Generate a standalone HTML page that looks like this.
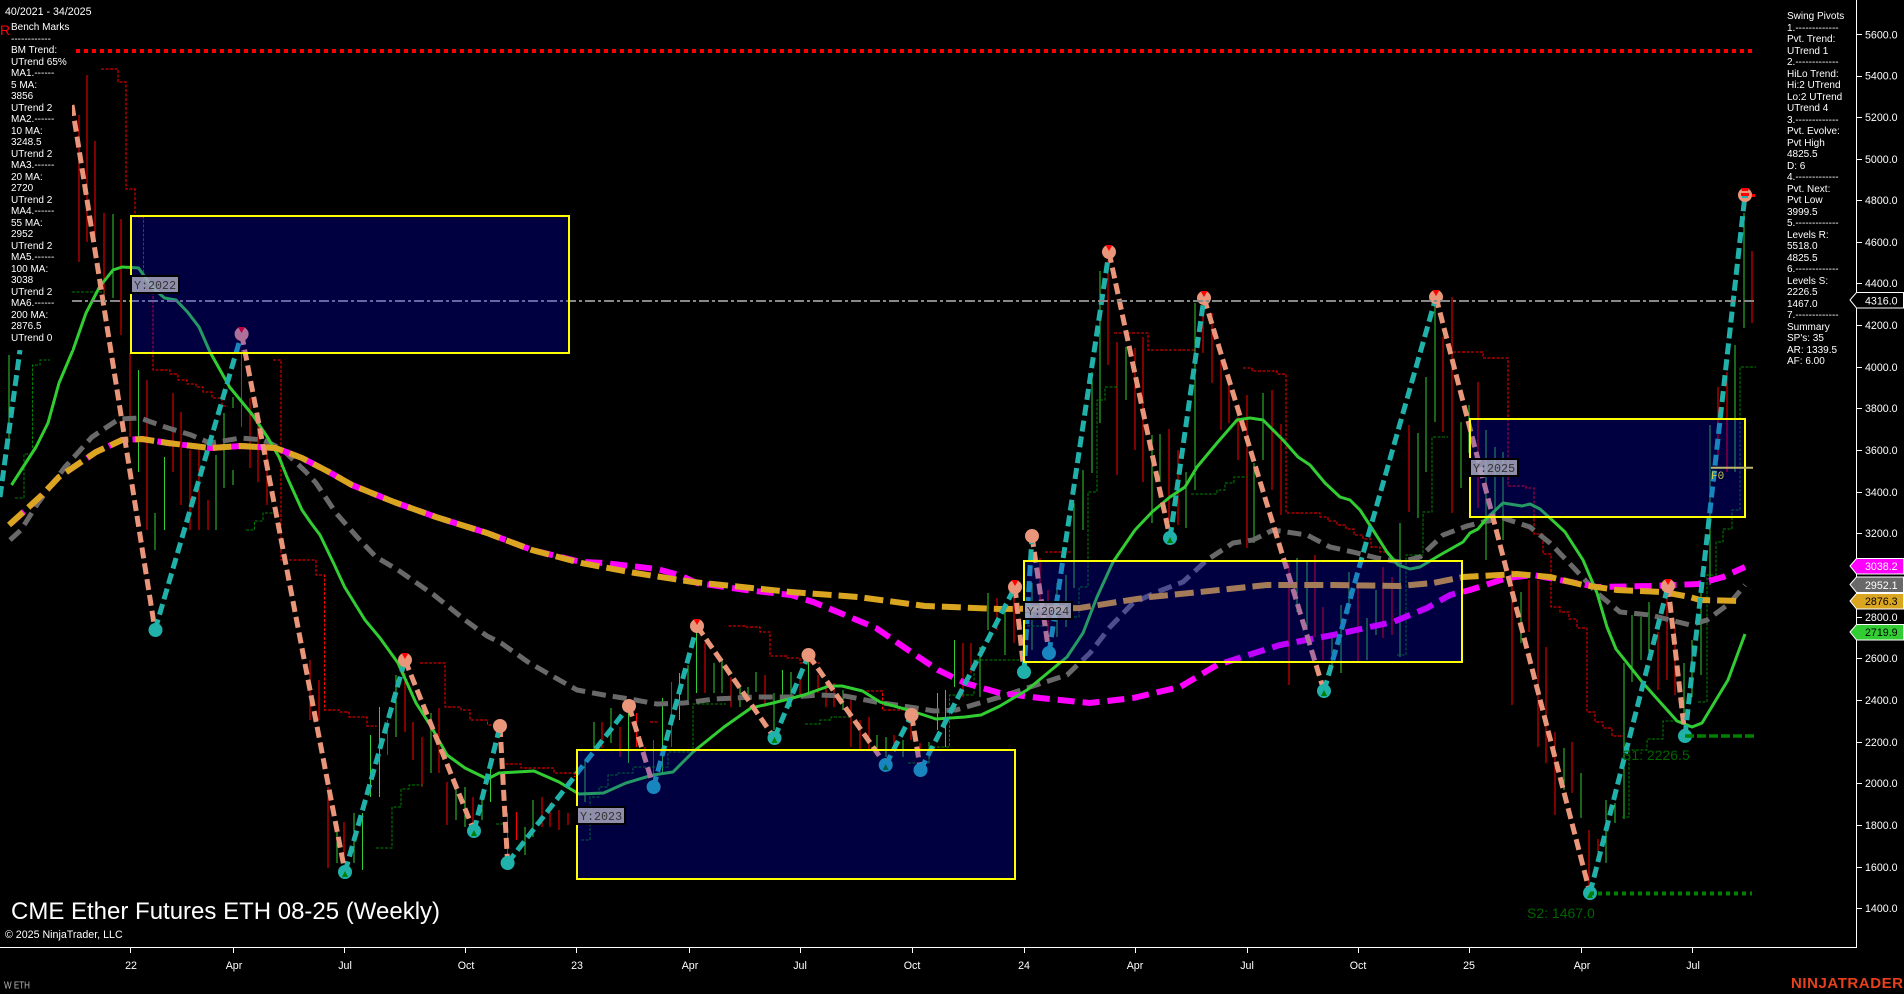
<!DOCTYPE html>
<html><head><meta charset="utf-8"><title>CME Ether Futures ETH 08-25 (Weekly)</title>
<style>
html,body{margin:0;padding:0;background:#000;width:1904px;height:994px;overflow:hidden}
body{position:relative;font-family:"Liberation Sans",Arial,sans-serif;color:#fff}
svg{position:absolute;left:0;top:0}
text{font-family:"Liberation Sans",Arial,sans-serif}
.p{position:absolute;font-size:10px;line-height:11.52px;white-space:nowrap;color:#fff}
</style></head><body>
<svg width="1904" height="994" viewBox="0 0 1904 994" fill="none">
<rect width="1904" height="994" fill="#000"/>
<!-- bars -->
<path shape-rendering="crispEdges" stroke="#ff0000" stroke-width="1" d="M79 115V262M87 75V242M95 141V240M104 213V300M121 219V335M130 353V437M147 380V530M173 393V472M181 412V505M190 450V530M199 450V530M208 500V530M241.500 350V427M250 398V468M258 422V482M267 450V505M310 660V720M319 680V720M328 787V868M344 822V863M387.500 720V755M405 673V732M413 722V760M422 737V787M439 708V773M447 782V825M473 797V830M507.600 813V857M516.500 812V840M542 797V827M550 803V827M559 810V830M568 813V825M602 722V748M620 727V757M636.600 713V747M645 747V757M653.600 740V790M671.400 682V747M705 643V693M731 677V707M765 675V707M800 673V697M818 675V693M826 683V707M834 683V707M851 700V747M860 720V750M869 717V750M894 735V750M911 713V740M920 743V757M963 643V697M971 643V673M997 598V630M1014 590V643M1040 558V617M1048 590V640M1108 260V365M1117 342V475M1135 348V450M1143 337V482M1169 429V530M1178 450V525M1203 303V353M1212 313V383M1221 360V430M1229 385V423M1238 417V460M1247 395V548M1272 390V490M1281 424V515M1289 563V685M1315 555V637M1323 607V660M1358 588V663M1383 567V638M1392 577V635M1409 425V512M1443 337V432M1452 297V513M1478 382V508M1512 570V705M1529 580V632M1538 580V747M1546 647V763M1555 732V815M1572 742V793M1589 830V897M1598 839V853M1658 632V690M1667 597V680M1675 628V695M1718 387V460M1727 372V472M1752 251V323"/>
<path shape-rendering="crispEdges" stroke="#32cd32" stroke-width="1" d="M113 214V298M138.500 370V472M155 513V550M164.500 457V530M216 455V530M224 413V488M233 397V408M233 470V485M337 830V863M354 813V863M362.500 813V870M370.500 735V797M379.500 707V797M396 675V737M431 713V773M456 787V820M465 787V827M482 795V820M490.600 768V802M525 827V855M533 800V837M585 760V802M594 722V750M611 708V743M628.500 710V763M662.500 698V773M679.500 673V720M688 665V700M696.400 627V693M714 663V693M722 658V693M740 685V707M748 687V697M756 672V692M774 693V730M782.600 670V700M791 672V707M808.500 662V693M843 690V710M877 735V750M886 737V757M903 740V757M929 742V763M937.500 693V730M945.500 690V747M954.500 640V687M980 647V697M988 593V630M1005 603V655M1032 583V650M1057 583V637M1066 575V627M1074 503V588M1083 470V530M1092 372V473M1100 271V423M1126 347V400M1152 435V523M1160 434V482M1186 472V528M1195 303V490M1254 463V543M1263 393V460M1297 558V612M1307 562V630M1332 637V667M1341 605V673M1349 572V613M1367 618V660M1376 590V635M1400 523V657M1418 433V518M1426 377V472M1435 300V422M1461 422V488M1469 405V453M1486 430V560M1495 447V517M1503 452V540M1521 592V643M1564 748V790M1581 773V818M1606 800V863M1615 803V823M1624 663V819M1632 615V682M1641 617V660M1649 602V652M1684 663V725M1692 640V697M1701 583V675M1710 425V585M1735 345V472M1744 213V328M9 355V440"/>
<!-- red steps -->
<path shape-rendering="crispEdges" stroke="#ff0000" stroke-width="1" stroke-dasharray="3 1.500" d="M101 69H118V82H126V189H135V217H143.500V288H153V370H170V374H178V380H187V384H196V387H203V392H212V398H222V406H228M273 360H281V530V560H300V560H316V575H324.500V710H340V712H349V717H367V726H376V727M420 663H445V707H461V710H470V720H487.500V725H500V728M501 764H521V768H554V773H574.500V777M650 722H658M728.600 626H746V627H760V632H770V656H787V658H800V663H820M862 691H882.600V710H911V718M1045 552H1072M1114 333H1148V350H1195M1243 368H1252V371H1277V374H1286V513H1320V517H1328V521H1337V525H1346V529H1354V535H1363V539H1371V547H1380V552H1388V556M1453 352H1483V358H1508V486H1526V488H1534V534H1543V554H1551V607H1560V612H1569V619H1577V628H1587V712H1595V722H1603V728H1612V736H1623"/>
<!-- green steps -->
<path shape-rendering="crispEdges" stroke="#008000" stroke-width="1" stroke-dasharray="3 1.500" d="M72 292H105M15 498H24V454H32.500V365H40V360H50M246 530H254.500V521H263V513H275M376 848H392V807H401V789H409V785H423M496 824H503M581 840H590V797H599V787H608V775H617V773H633V767H668V752H693V704H726M805 724H820V720H831V717H849M908 763H929V747H949.500V695H974V660H1020M1027 626H1048M1074 617H1079V587H1088V492H1097V400H1105V387H1117M1191 494H1217V490H1225V483H1234V477H1247M1397 655H1406V555H1416M1416 555H1423V512H1432V437H1448M1622 817H1629V750H1647V739H1663V721H1677M1698 702H1707V575H1716V542H1723V529H1732V510H1740V367H1756"/>
<!-- gray -->
<polyline stroke="#696969" stroke-width="5" stroke-dasharray="14 7" points="10,540 21,530 38,503 65,467 92,437 119,419 140,418 165,427 191,435 210,443 241,438 264,440 283,450 306,472 316,483 336,513 358,538 376,557 398,570 434,595 465,620 487,636 501,643 528,662 554,677 577,690 604,695 630,699 657,704 684,703 715,699 755,697 791,697 820,695 845,696 876,702 916,708 934,711 956,710 1000,697 1027,688 1067,675 1090,653 1110,627 1133,603 1157,592 1183,582 1207,560 1233,543 1253,540 1273,530 1307,535 1330,547 1353,552 1377,558 1400,562 1420,557 1443,535 1467,526 1483,522 1503,518 1530,527 1550,543 1573,567 1597,593 1620,612 1650,615 1690,625 1707,620 1730,603 1745,585"/>
<!-- magenta -->
<polyline stroke="#ff00ff" stroke-width="6" stroke-dasharray="17 8" points="11.500,523 42,495 59,477 96,452 122,440 142,439 168,443 210,448 241,446 275.500,448 302,458 329,472 352,485 394,502 436,517 487,533 532,550 581,562 604,563 657,569 679,575 697,583 746,590 791,595 813,602 845,615 876,628 911,652 938,670 965,683 1000,693 1040,698 1090,703 1133,698 1180,687 1217,665 1280,645 1333,635 1393,622 1427,608 1450,595 1470,590 1507,578 1533,575 1597,587 1650,586 1698,584 1723,577 1745,567"/>
<!-- green MA -->
<polyline stroke="#32cd32" stroke-width="3" stroke-linejoin="round" points="11.500,485 36,447 48,423 59,383 73,350 86,313 99.500,287 113,270 122,267 138.500,268 153,288 164.500,298 176,300 187.500,312 199,327 210,352 229.600,387 252.600,415 268,438 279,457 287,477 302,510 311,523 320,535 333.500,563 344.600,587 365,620 380,638 398,663 416,703 432,728 447,755 465,768 487.500,779 499,773 534,771 559,782 579,794 603.600,793 626,783 653,775 673,772 693,752 724,727 751,708 773,703 804,695 829,686 842,686 862.500,691 880,702 911.600,711 936,719 965,717 981,715 1000,706 1027,690 1067,657 1083,633 1097,597 1113,562 1135,530 1152,512 1170,497 1185,487 1197,467 1217,443 1237,420 1250,418 1263,420 1283,440 1298,457 1310,465 1325,483 1340,497 1350,500 1360,510 1373,530 1387,552 1398,565 1410,569 1420,567 1440,555 1463,542 1470,533 1478,529 1487,518 1503,503 1522,506 1530,504 1540,509 1550,518 1565,532 1583,560 1597,593 1607,627 1616,649 1643,683 1677,721 1692,727 1702,723 1728,680 1745,634"/>
<!-- gold -->
<polyline stroke="#daa520" stroke-width="6" stroke-dasharray="19 7" points="9,525 42,495 59,477 96,452 122,440 142,439 168,443 210,448 241,446 275.500,448 302,458 329,472 352,485 394,502 436,517 487,533 532,550 581,563 635,573 693,582 791,592 858,597 925,606 1000,609 1080,608 1117,602 1150,597 1200,592 1267,585 1333,585 1400,586 1433,583 1463,577 1517,574 1550,577 1583,585 1617,590 1663,592 1690,597 1700,600 1740,601"/>
<!-- zigzag -->
<path stroke="#e9967a" stroke-width="5" stroke-dasharray="11 5" d="M72 105L155 630M241.600 334L345 872M405 660L474 831M500 726L507.600 863M629 706L653.600 787M697 626L774.500 738M808.500 655L885.700 765M911.600 715L920.500 770M1015 587L1024 672M1032 536L1049 653M1109 252L1170 538M1204 298L1324 691M1436 297L1590 893M1668 586L1685 736"/>
<path stroke="#20b2aa" stroke-width="5" stroke-dasharray="11 5" d="M0 497L20 350M155 630L241.600 334M345 872L405 660M474 831L500 726M507.600 863L629 706M653.600 787L697 626M774.500 738L808.500 655M885.700 765L911.600 715M920.500 770L1015 587M1024 672L1032 536M1049 653L1109 252M1170 538L1204 298M1324 691L1436 297M1590 893L1668 586M1685 736L1745 195"/>
<!-- pivots -->
<g fill="#e9967a"><circle cx="241.600" cy="334" r="7"/><circle cx="405" cy="660" r="7"/><circle cx="500" cy="726" r="7"/><circle cx="629" cy="706" r="7"/><circle cx="697" cy="626" r="7"/><circle cx="808.500" cy="655" r="7"/><circle cx="911.600" cy="715" r="7"/><circle cx="1015" cy="587" r="7"/><circle cx="1032" cy="536" r="7"/><circle cx="1109" cy="252" r="7"/><circle cx="1204" cy="298" r="7"/><circle cx="1436" cy="297" r="7"/><circle cx="1668" cy="586" r="7"/><circle cx="1745" cy="195" r="7"/></g>
<g fill="#20b2aa"><circle cx="155.500" cy="630" r="7"/><circle cx="345" cy="872" r="7"/><circle cx="474" cy="831" r="7"/><circle cx="507.600" cy="863" r="7"/><circle cx="653.600" cy="787" r="7"/><circle cx="774.500" cy="738" r="7"/><circle cx="885.700" cy="765" r="7"/><circle cx="920.500" cy="770" r="7"/><circle cx="1024" cy="672" r="7"/><circle cx="1049" cy="653" r="7"/><circle cx="1170" cy="538" r="7"/><circle cx="1324" cy="691" r="7"/><circle cx="1590" cy="893" r="7"/><circle cx="1685" cy="736" r="7"/></g>
<path fill="#ff0000" d="M238 327h7l-3.500 6zM401.500 653h7l-3.500 6zM693.500 619h7l-3.500 6zM1105.500 245h7l-3.500 6zM1200.500 291h7l-3.500 6zM1432.500 290h7l-3.500 6zM1664.500 579h7l-3.500 6zM1011.500 580h7l-3.500 6zM1741 188h8l-1 3h-6zM1741 193h8v3h-8zM1752 194h3v3h-3z"/>
<path fill="#20b2aa" d="M1742 196h6v2h-6z"/>
<path fill="#008000" d="M345 871l-3 6h6zM474 830l-3 6h6zM774.500 737l-3 6h6zM885.700 764l-3 6h6zM1324 690l-3 6h6zM1590 892l-3 6h6zM1170 537l-3 6h6z"/>
<!-- levels -->
<path stroke="#ff0000" stroke-width="4" stroke-dasharray="4 4" d="M76 51H1752"/>
<path stroke="#888" stroke-width="2" stroke-dasharray="10 3 3 3" d="M72 301H1755"/>
<path stroke="#008000" stroke-width="3.500" stroke-dasharray="9 3" d="M1685 736H1757"/>
<path stroke="#008000" stroke-width="4" stroke-dasharray="4 4" d="M1590 893.500H1752"/>
<!-- boxes -->
<g fill="#0000ff" fill-opacity=".25" stroke="#ffff00" stroke-width="2"><rect x="131" y="216" width="438" height="137"/><rect x="577" y="750" width="438" height="129"/><rect x="1024" y="561" width="438" height="101"/><rect x="1470" y="419" width="275" height="98"/></g>
<!-- Y labels -->
<g fill="#a8a8c0" fill-opacity=".85" stroke="#000" stroke-width="2"><rect x="131" y="276" width="48" height="17"/><rect x="577" y="807" width="48" height="17"/><rect x="1024" y="602" width="48" height="17"/><rect x="1470" y="459" width="48" height="17"/></g>
<g fill="#333" font-size="11.700"><text x="134" y="289" style="font-family:'Liberation Mono',monospace">Y:2022</text><text x="580" y="820" style="font-family:'Liberation Mono',monospace">Y:2023</text><text x="1027" y="615" style="font-family:'Liberation Mono',monospace">Y:2024</text><text x="1473" y="472" style="font-family:'Liberation Mono',monospace">Y:2025</text></g>
<path stroke="#bdb76b" stroke-width="2" d="M1711 467.700H1753"/>
<text x="1711" y="479" font-size="11" fill="#c8c850" style="font-family:'Liberation Mono',monospace">F0</text>
<text x="1622" y="760" font-size="14" fill="#006400">S1: 2226.5</text>
<text x="1527" y="918" font-size="14" fill="#006400">S2: 1467.0</text>
<!-- panel mask -->
<rect x="0" y="0" width="72" height="350" fill="#000"/>
<!-- axes -->
<rect x="1856" y="0" width="48" height="947" fill="#000"/>
<rect x="0" y="948" width="1904" height="46" fill="#000"/>
<path stroke="#fff" stroke-width="1" d="M1856.500 0V947.500H0M1856 34.500h6M1856 76.500h6M1856 117.500h6M1856 159.500h6M1856 200.500h6M1856 242.500h6M1856 283.500h6M1856 325.500h6M1856 367.500h6M1856 408.500h6M1856 450.500h6M1856 492.500h6M1856 533.500h6M1856 617.500h6M1856 658.500h6M1856 700.500h6M1856 742.500h6M1856 783.500h6M1856 825.500h6M1856 867.500h6M1856 908.500h6M130.500 948v5M233.500 948v5M344.500 948v5M465.500 948v5M576.500 948v5M689.500 948v5M800.500 948v5M912.500 948v5M1024.500 948v5M1135.500 948v5M1247.500 948v5M1358.500 948v5M1469.500 948v5M1581.500 948v5M1692.500 948v5"/>
<g fill="#fff" font-size="10.670">
<text x="1865" y="38.500">5600.0</text><text x="1865" y="79.500">5400.0</text><text x="1865" y="121">5200.0</text><text x="1865" y="163">5000.0</text><text x="1865" y="204">4800.0</text><text x="1865" y="246">4600.0</text><text x="1865" y="287">4400.0</text><text x="1865" y="329">4200.0</text><text x="1865" y="371">4000.0</text><text x="1865" y="412">3800.0</text><text x="1865" y="454">3600.0</text><text x="1865" y="496">3400.0</text><text x="1865" y="537">3200.0</text><text x="1865" y="621">2800.0</text><text x="1865" y="662">2600.0</text><text x="1865" y="704">2400.0</text><text x="1865" y="746">2200.0</text><text x="1865" y="787">2000.0</text><text x="1865" y="829">1800.0</text><text x="1865" y="871">1600.0</text><text x="1865" y="912">1400.0</text>
</g>
<g stroke="#fff" stroke-width="1">
<path fill="#000" d="M1850 300L1856.500 292.500H1903.500V308H1856.500Z"/>
<path fill="#ff00ff" d="M1850 566L1856.500 558.500H1903.500V574H1856.500Z"/>
<path fill="#696969" d="M1850 584.500L1856.500 577H1903.500V592.500H1856.500Z"/>
<path fill="#daa520" d="M1850 601L1856.500 593.500H1903.500V609H1856.500Z"/>
<path fill="#32cd32" d="M1850 632L1856.500 624.500H1903.500V640H1856.500Z"/>
</g>
<g font-size="10.670">
<text x="1865" y="304.500" fill="#fff">4316.0</text><text x="1865" y="570" fill="#fff">3038.2</text><text x="1865" y="589" fill="#fff">2952.1</text><text x="1865" y="605" fill="#000">2876.3</text><text x="1865" y="636" fill="#000">2719.9</text>
</g>
<g fill="#fff" font-size="10.670" text-anchor="middle">
<text x="131" y="969">22</text><text x="234" y="969">Apr</text><text x="345" y="969">Jul</text><text x="466" y="969">Oct</text><text x="577" y="969">23</text><text x="690" y="969">Apr</text><text x="800" y="969">Jul</text><text x="912" y="969">Oct</text><text x="1024" y="969">24</text><text x="1135" y="969">Apr</text><text x="1247" y="969">Jul</text><text x="1358" y="969">Oct</text><text x="1469" y="969">25</text><text x="1582" y="969">Apr</text><text x="1693" y="969">Jul</text>
</g>
<text x="11" y="919" font-size="24" fill="#fff">CME Ether Futures ETH 08-25 (Weekly)</text>
<text x="5" y="938" font-size="10.670" fill="#fff">© 2025 NinjaTrader, LLC</text>
<text x="4" y="988.500" font-size="10.500" fill="#bbb" textLength="26" lengthAdjust="spacingAndGlyphs">W ETH</text>
<text x="1791" y="988" font-size="15" font-weight="700" fill="#e8401c" textLength="112">NINJATRADER</text>
<text x="5" y="15" font-size="10.670" fill="#fff">40/2021 - 34/2025</text>
<text x="0" y="35" font-size="14" fill="#ff0000">R</text>
</svg>
<div class="p" style="left:11px;top:22px">Bench Marks<br>------------<br>BM Trend:<br>UTrend 65%<br>MA1.------<br>5 MA:<br>3856<br>UTrend 2<br>MA2.------<br>10 MA:<br>3248.5<br>UTrend 2<br>MA3.------<br>20 MA:<br>2720<br>UTrend 2<br>MA4.------<br>55 MA:<br>2952<br>UTrend 2<br>MA5.------<br>100 MA:<br>3038<br>UTrend 2<br>MA6.------<br>200 MA:<br>2876.5<br>UTrend 0</div>
<div class="p" style="left:1787px;top:11px">Swing Pivots<br>1.-------------<br>Pvt. Trend:<br>UTrend 1<br>2.-------------<br>HiLo Trend:<br>Hi:2 UTrend<br>Lo:2 UTrend<br>UTrend 4<br>3.-------------<br>Pvt. Evolve:<br>Pvt High<br>4825.5<br>D: 6<br>4.-------------<br>Pvt. Next:<br>Pvt Low<br>3999.5<br>5.-------------<br>Levels R:<br>5518.0<br>4825.5<br>6.-------------<br>Levels S:<br>2226.5<br>1467.0<br>7.-------------<br>Summary<br>SP's: 35<br>AR: 1339.5<br>AF: 6.00</div>
</body></html>
